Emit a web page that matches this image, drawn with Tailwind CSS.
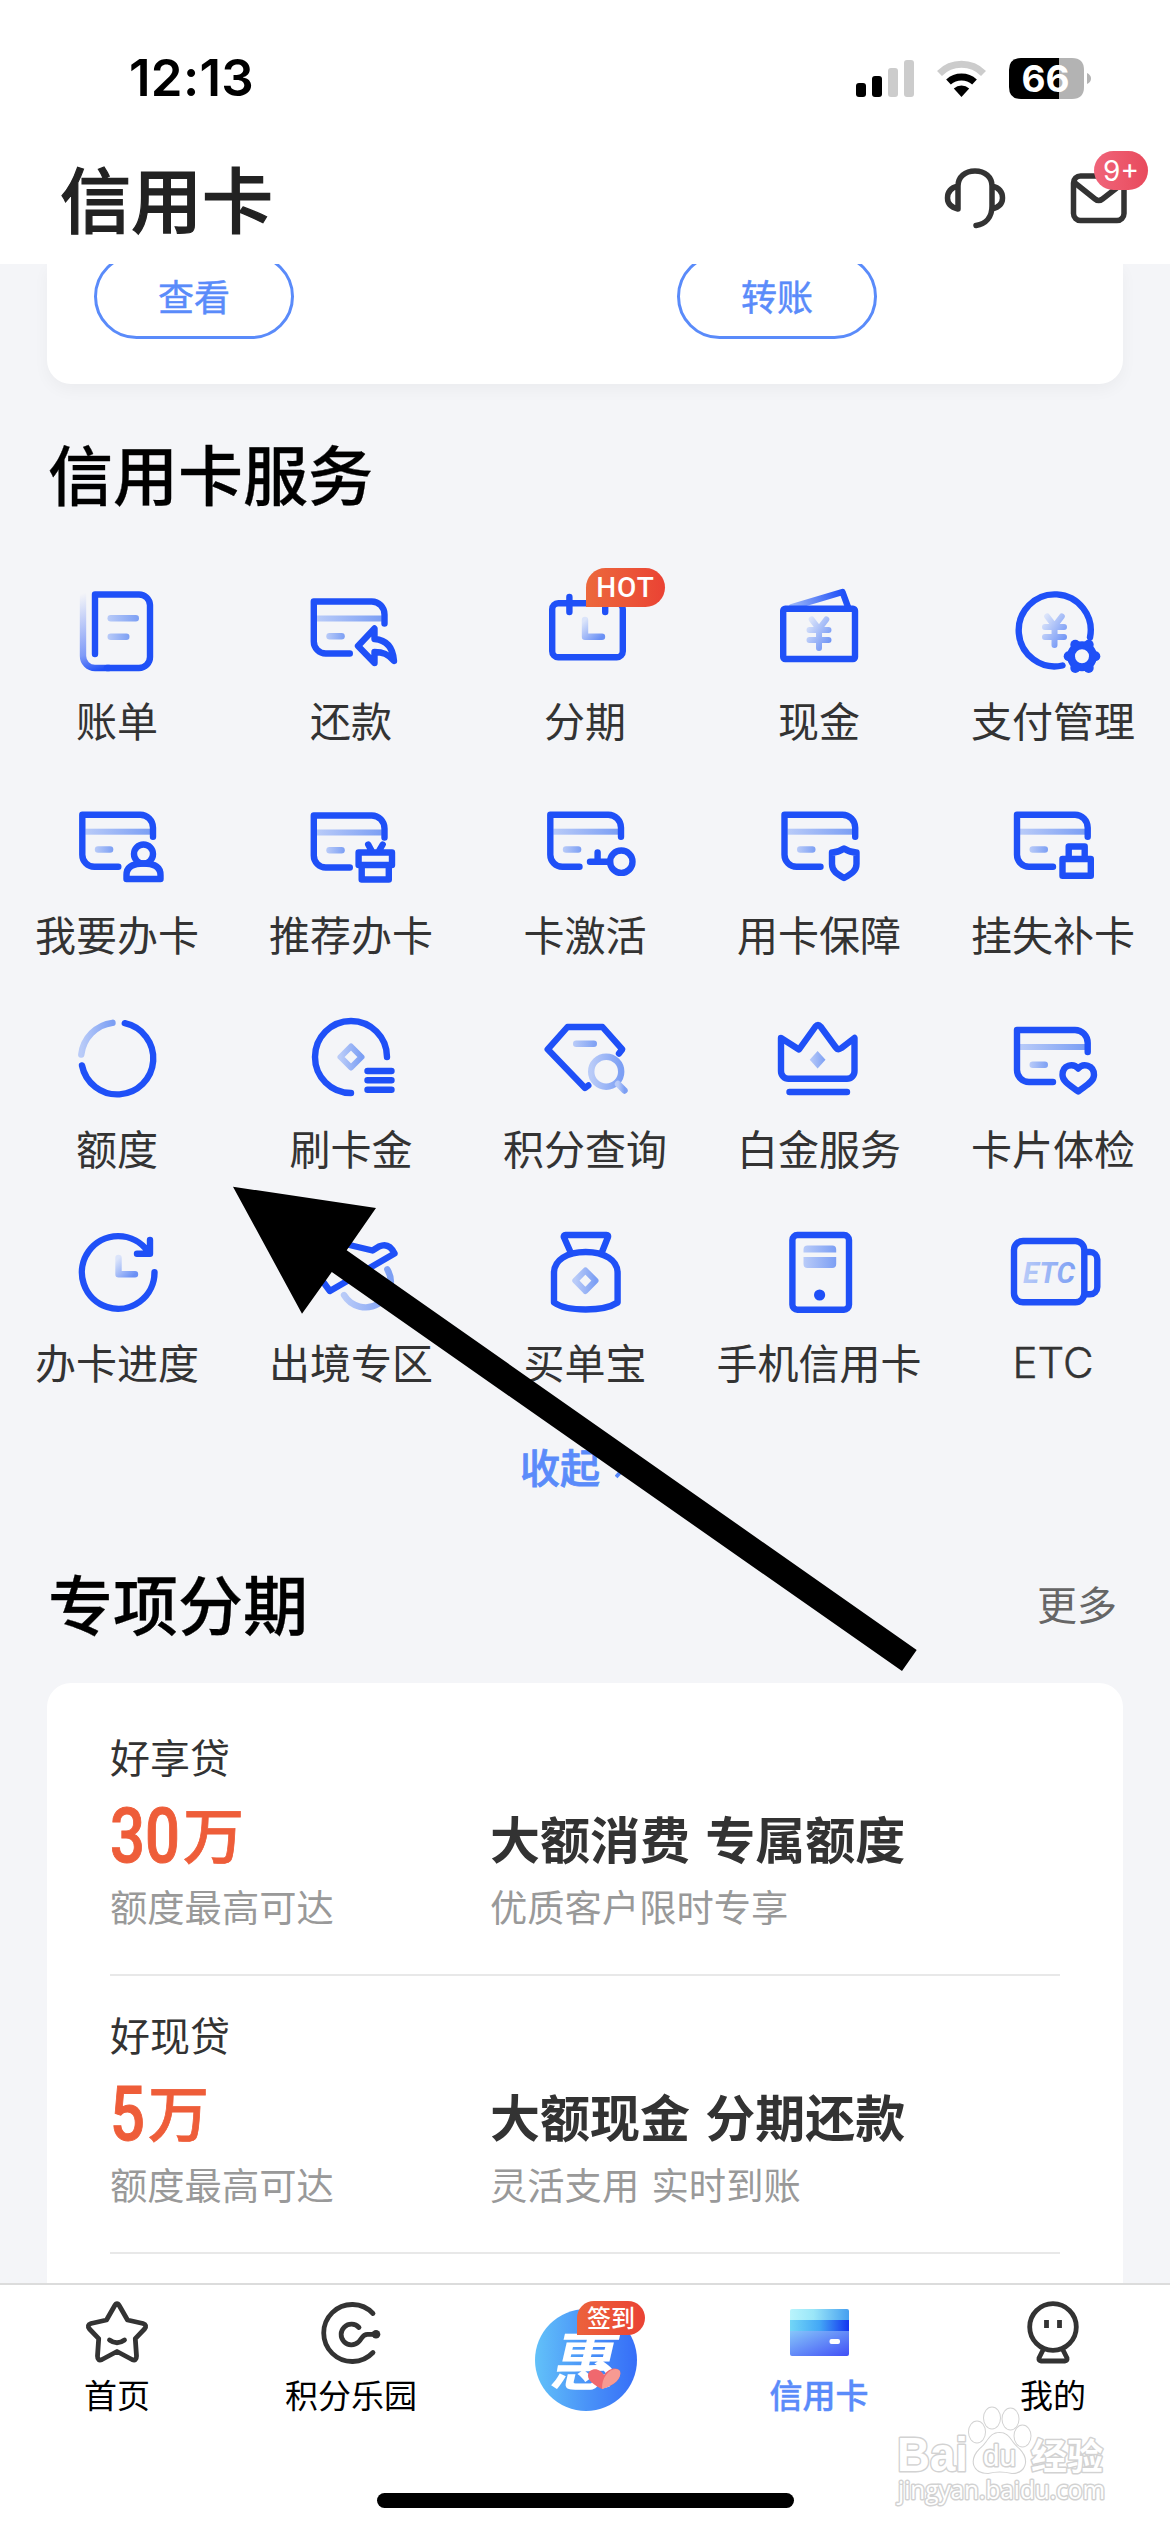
<!DOCTYPE html>
<html lang="zh-CN">
<head>
<meta charset="utf-8">
<title>信用卡</title>
<script src="https://cdn.jsdelivr.net/npm/@tailwindcss/browser@4"></script>
</head>
<body class="bg-white">
<!-- shared gradients and symbols -->
<svg class="absolute size-0" aria-hidden="true">
  <defs>
    <linearGradient id="soft"><stop offset="0" stop-color="#b9cbf8"/><stop offset="1" stop-color="#7c9ff4"/></linearGradient>
    <linearGradient id="softv" x1="0" y1="0" x2="1" y2="1"><stop offset="0" stop-color="#dbe4fa"/><stop offset="1" stop-color="#6a90f5"/></linearGradient>
    <linearGradient id="book" gradientUnits="userSpaceOnUse" x1="24" y1="14" x2="50" y2="88"><stop offset="0" stop-color="#1f50f7" stop-opacity="0"/><stop offset=".75" stop-color="#1f50f7" stop-opacity=".55"/><stop offset="1" stop-color="#1f50f7"/></linearGradient>
    <linearGradient id="flap" gradientUnits="userSpaceOnUse" x1="32" y1="25" x2="84" y2="12"><stop offset="0" stop-color="#9db7f8"/><stop offset="1" stop-color="#1f50f7"/></linearGradient>
    <g id="card" fill="none" stroke="#1f50f7" stroke-width="6.4" stroke-linecap="round" stroke-linejoin="round">
      <rect x="3" y="14" width="65" height="6" fill="url(#soft)" stroke="none"/>
      <rect x="12.5" y="31.5" width="18.5" height="6.5" rx="3.2" fill="url(#soft)" stroke="none"/>
      <path d="M36 52H12A12 12 0 0 1 0 40V0H58A12.700 13 0 0 1 70.700 13V22"/>
    </g>
    <g id="yen" fill="none" stroke="url(#softv)" stroke-width="6" stroke-linecap="round">
      <path d="M-7.300 -10.500L0 -1L7.300 -10.500M-9.500 0Q0 .1 9.500 0M-9.500 10Q0 10.100 9.500 10M0 -1Q.1 9 0 18"/>
    </g>
  </defs>
</svg>

<div class="relative flex h-[2532px] w-[1170px] flex-col overflow-hidden bg-[#f4f5f8] font-['Noto_Sans_CJK_SC',sans-serif]">

  <!-- status bar and page title -->
  <header class="h-[264px] shrink-0 bg-white">
    <div class="flex h-[156px] items-center pl-[129px] pr-[79px]">
      <span class="font-['Inter',sans-serif] text-[51px] font-semibold leading-[50px] tracking-[0.3px] text-black">12:13</span>
      <svg class="ml-auto" width="236" height="44" viewBox="0 0 236 44">
        <g fill="#000"><rect x="1" y="27" width="10" height="14" rx="3"/><rect x="17" y="20" width="10" height="21" rx="3"/></g>
        <g fill="#ccc"><rect x="33" y="12" width="10" height="29" rx="3"/><rect x="49" y="4" width="10" height="37" rx="3"/></g>
        <path d="M106.500 41L98.800 32.500A11.500 11.500 0 0 1 114.200 32.500Z" fill="#000"/>
        <path d="M93.500 26A19.500 19.500 0 0 1 119.500 26" fill="none" stroke="#000" stroke-width="7"/>
        <path d="M84.500 17.500A31 31 0 0 1 128.500 17.500" fill="none" stroke="#ccc" stroke-width="7"/>
        <path d="M166 2H204V43H166Q154 43 154 31V14Q154 2 166 2Z" fill="#000"/>
        <path d="M204 2H217Q229 2 229 14V31Q229 43 217 43H204Z" fill="#b3b3b3"/>
        <path d="M232 17Q236 19 236 22.500T232 28Z" fill="#b3b3b3"/>
        <text x="190.500" y="36" font-family="Inter, sans-serif" font-weight="700" font-size="37" fill="#fff" text-anchor="middle">66</text>
      </svg>
    </div>
    <div class="flex items-center pl-[60px] pr-[20px]">
      <h1 class="-translate-y-[2px] text-[71px] font-medium leading-[84px] text-[#222] [-webkit-text-stroke:1.2px_#222]">信用卡</h1>
      <svg class="ml-auto" width="66" height="66" viewBox="0 0 66 66" fill="none" stroke="#333" stroke-width="5.500" stroke-linecap="round">
        <path d="M16 44V21C16 12 23 6 33 6S50 12 50 21V41C50 52 44 59 34 60.500M16 44C8 42 5.500 38 5.500 33S8 23 16 21M50 44C58 42 60.500 38 60.500 33S58 23 50 21"/>
      </svg>
      <div class="relative ml-[56px]">
        <svg width="86" height="66" viewBox="0 0 86 66" fill="none" stroke="#333" stroke-width="5.500" stroke-linejoin="round" stroke-linecap="round">
          <rect x="9.500" y="11" width="50.500" height="44.500" rx="7"/><path d="M11 18L31 34Q34.700 37 38.500 34L59 18"/>
        </svg>
        <span class="absolute left-[30px] top-[-14px] flex h-[39px] w-[54px] items-center justify-center rounded-full bg-linear-to-r from-[#f0647a] to-[#e84a5c] font-['Inter',sans-serif] text-[28px] leading-none text-white">9+</span>
      </div>
    </div>
  </header>

  <main class="min-h-0 flex-1 overflow-hidden">
    <div class="mx-[47px] flex h-[120px] rounded-b-[24px] bg-white pl-[47px] shadow-[0_6px_16px_rgba(0,0,0,0.04)] [clip-path:inset(0_-20px_-20px_-20px)]">
      <div class="-mt-[10px] flex h-[85px] w-[200px] items-center justify-center rounded-full border-[3px] border-[#5a8bfa] pb-[4px] text-[36px] leading-none text-[#5a8bfa] [-webkit-text-stroke:0.5px_#5a8bfa]">查看</div>
      <div class="-mt-[10px] ml-[383px] flex h-[85px] w-[200px] items-center justify-center rounded-full border-[3px] border-[#5a8bfa] pb-[4px] text-[36px] leading-none text-[#5a8bfa] [-webkit-text-stroke:0.5px_#5a8bfa]">转账</div>
    </div>

    <h2 class="ml-[48px] mt-[55px] text-[65px] font-medium leading-[66px] text-black [-webkit-text-stroke:0.3px_#000]">信用卡服务</h2>

    <div class="mt-[75px] grid grid-cols-5 gap-y-[52px] text-center text-[41px] leading-[42px] text-[#333] [&_svg]:mx-auto [&_svg]:block [&_p]:mt-[18px] [&_p]:mb-[2px] [&_p]:whitespace-nowrap">
      <div>
        <svg width="120" height="100" viewBox="0 0 120 100" fill="none" stroke="#1f50f7" stroke-width="6.400" stroke-linecap="round" stroke-linejoin="round">
          <path d="M26 15V76A12 12 0 0 0 38 88H52" stroke="url(#book)"/><path d="M38 74V14.500H82A11 11 0 0 1 93 25V77A11 11 0 0 1 82 88H50"/>
          <g fill="url(#soft)" stroke="none"><rect x="50.500" y="35" width="31.500" height="6.500" rx="3.200"/><rect x="50.500" y="53.500" width="22" height="6.500" rx="3.200"/></g>
        </svg><p>账单</p>
      </div>
      <div>
        <svg width="120" height="100" viewBox="0 0 120 100"><use href="#card" x="22.800" y="21.500"/>
          <path d="M67 66L83.500 48.500V59C95 60 102 67 103 81C97 74 92 72 83.500 72V83Z" fill="none" stroke="#1f50f7" stroke-width="6.400" stroke-linejoin="round"/>
        </svg><p>还款</p>
      </div>
      <div class="relative">
        <svg width="120" height="100" viewBox="0 0 120 100" fill="none" stroke="#1f50f7" stroke-width="6.400" stroke-linecap="round" stroke-linejoin="round">
          <rect x="27.200" y="23.300" width="70.600" height="54" rx="6"/><path d="M44.400 17V32M80.200 17V32"/><path d="M60 40V56.700H77" stroke="url(#softv)"/>
        </svg><p>分期</p>
        <span class="absolute left-[118px] top-[-12px] flex h-[39px] w-[79px] items-center justify-center rounded-full rounded-bl-none bg-linear-to-r from-[#ec683c] to-[#ea4234] font-['Roboto',sans-serif] text-[28px] font-medium leading-none tracking-[1px] text-white">HOT</span>
      </div>
      <div>
        <svg width="120" height="100" viewBox="0 0 120 100" fill="none" stroke="#1f50f7" stroke-width="6.400" stroke-linecap="round" stroke-linejoin="round">
          <path d="M33 27L83.500 12L89 27" stroke="url(#flap)"/><rect x="24.200" y="28.700" width="71.800" height="50.300" rx="2"/><use href="#yen" x="60" y="50"/>
        </svg><p>现金</p>
      </div>
      <div>
        <svg width="120" height="100" viewBox="0 0 120 100" fill="none" stroke="#1f50f7" stroke-width="6.400" stroke-linecap="round" stroke-linejoin="round">
          <path d="M97 57.500A36 36 0 1 0 69.500 85.500"/><use href="#yen" x="61.500" y="47"/>
          <circle cx="89" cy="76.300" r="11" stroke-width="8"/>
          <g fill="#1f50f7" stroke="none"><circle cx="102.300" cy="76.300" r="5"/><circle cx="75.700" cy="76.300" r="5"/><circle cx="95.700" cy="64.700" r="5"/><circle cx="82.300" cy="64.700" r="5"/><circle cx="95.700" cy="87.900" r="5"/><circle cx="82.300" cy="87.900" r="5"/></g>
        </svg><p>支付管理</p>
      </div>

      <div>
        <svg width="120" height="100" viewBox="0 0 120 100" fill="none" stroke="#1f50f7" stroke-width="6.400" stroke-linejoin="round"><use href="#card" x="25.300" y="20.700"/>
          <circle cx="86.500" cy="60" r="9.500"/><path d="M69.500 85V81C69.500 73 76 69.500 86.500 69.500S103.500 73 103.500 81V85Z"/>
        </svg><p>我要办卡</p>
      </div>
      <div>
        <svg width="120" height="100" viewBox="0 0 120 100" fill="none" stroke="#1f50f7" stroke-width="6.400" stroke-linejoin="round" stroke-linecap="round"><use href="#card" x="22.800" y="21.500"/>
          <path d="M67.600 58.500H101V71H67.600ZM70.700 71V85.500H97.800V71M77.200 50.500L81.500 58.500M91.700 50.500L87 58.500"/>
        </svg><p>推荐办卡</p>
      </div>
      <div>
        <svg width="120" height="100" viewBox="0 0 120 100" fill="none" stroke="#1f50f7" stroke-width="6.400" stroke-linecap="round" stroke-linejoin="round">
          <rect x="28.300" y="34.700" width="65" height="6" fill="url(#soft)" stroke="none"/><rect x="37.800" y="52.200" width="18.500" height="6.500" rx="3.200" fill="url(#soft)" stroke="none"/>
          <path d="M54.500 72.700H37.300A12 12 0 0 1 25.300 60.700V20.700H83.300A12.700 13 0 0 1 96 33.700V42.700"/>
          <circle cx="96.300" cy="67.700" r="11.200"/><path d="M65 67.700H85M72.600 67V58.500"/>
        </svg><p>卡激活</p>
      </div>
      <div>
        <svg width="120" height="100" viewBox="0 0 120 100" fill="none" stroke="#1f50f7" stroke-width="6.400" stroke-linejoin="round"><use href="#card" x="25.500" y="20.700"/>
          <path d="M85 54.500Q79 58.500 73 58.500V70C73 77 78 80 85 84C92 80 97.500 77 97.500 70V58.500Q91 58.500 85 54.500Z"/>
        </svg><p>用卡保障</p>
      </div>
      <div>
        <svg width="120" height="100" viewBox="0 0 120 100" fill="none" stroke="#1f50f7" stroke-width="6.400" stroke-linejoin="round"><use href="#card" x="24" y="20.700"/>
          <path d="M69.500 65H97.800V81.700H69.500ZM75.700 65V52.500H91.700V65"/>
        </svg><p>挂失补卡</p>
      </div>

      <div>
        <svg width="120" height="100" viewBox="0 0 120 100" fill="none" stroke="#1f50f7" stroke-width="6.400" stroke-linecap="round">
          <path d="M67.800 15.200A36 36 0 1 1 25 57.500"/><path d="M24.300 46.500A36 36 0 0 1 55.500 14.800" stroke="url(#soft)"/>
        </svg><p>额度</p>
      </div>
      <div>
        <svg width="120" height="100" viewBox="0 0 120 100" fill="none" stroke="#1f50f7" stroke-width="6.400" stroke-linecap="round">
          <path d="M96 49A36 36 0 1 0 60 85M76.500 63H100.500M76.500 72.300H100.500M76.500 81.700H100.500"/><path d="M60 38.500L70.500 49L60 59.500L49.500 49Z" stroke="url(#soft)" stroke-width="6" stroke-linejoin="round"/>
        </svg><p>刷卡金</p>
      </div>
      <div>
        <svg width="120" height="100" viewBox="0 0 120 100" fill="none" stroke="#1f50f7" stroke-width="6.400" stroke-linecap="round" stroke-linejoin="round">
          <path d="M94 45.500L97.300 41.300L77.500 19H42.500L22.700 41.300L60 80L63.300 77.500"/><rect x="48" y="32.500" width="24" height="6.500" rx="3.200" fill="url(#soft)" stroke="none"/>
          <g stroke="url(#soft)"><circle cx="81.200" cy="63.700" r="15"/><path d="M93 76L99.500 82.500"/></g>
        </svg><p>积分查询</p>
      </div>
      <div>
        <svg width="120" height="100" viewBox="0 0 120 100" fill="none" stroke="#1f50f7" stroke-width="6.400" stroke-linecap="round" stroke-linejoin="round">
          <path d="M22 30L40 41.500L56.500 18.500Q59 15.500 61.500 18.500L76.500 39Q79 42.500 82.500 40L95.500 30V63A7.500 7.500 0 0 1 88 70.700H29.500A7.500 7.500 0 0 1 22 63ZM30.500 84H88"/><path d="M58.600 43L66.500 51.700L58.600 60.500L50.700 51.700Z" fill="url(#soft)" stroke="none"/>
        </svg><p>白金服务</p>
      </div>
      <div>
        <svg width="120" height="100" viewBox="0 0 120 100" fill="none" stroke="#1f50f7" stroke-width="6.400" stroke-linejoin="round"><use href="#card" x="24" y="22"/>
          <path d="M85.200 60.500C80 54.500 69.500 57 69.500 67C69.500 74 78 78 85.200 83.500C92 78 101 74 101 67C101 57 90 54.500 85.200 60.500Z"/>
        </svg><p>卡片体检</p>
      </div>

      <div>
        <svg width="120" height="100" viewBox="0 0 120 100" fill="none" stroke="#1f50f7" stroke-width="6.400" stroke-linecap="round" stroke-linejoin="round">
          <path d="M97.500 50.300A36.300 36.300 0 1 1 90.500 29M93 18V31.700H80"/><path d="M61.500 36V52.300H78" stroke="url(#softv)"/>
        </svg><p>办卡进度</p>
      </div>
      <div>
        <svg width="120" height="100" viewBox="0 0 120 100" fill="none" stroke="#1f50f7" stroke-width="6.400" stroke-linecap="round" stroke-linejoin="round">
          <path d="M53 73A25 25 0 0 0 96.300 47.300" stroke="url(#soft)"/><path d="M50 21L81.500 28.500L88 24.500Q98 20 103.500 31.500L38.900 69L30 57"/>
        </svg><p>出境专区</p>
      </div>
      <div>
        <svg width="120" height="100" viewBox="0 0 120 100" fill="none" stroke="#1f50f7" stroke-width="6.400" stroke-linecap="round" stroke-linejoin="round">
          <path d="M45.500 30L38.800 15Q38.500 13 40.500 13H81.500Q83.500 13 83 15L77 30M29 80.500V51C29 38 42 30 60.700 30S92.600 38 92.600 51V80.500C85 85.500 74 87.500 60.700 87.500S36 85.500 29 80.500Z"/><path d="M60.400 48.500L70.500 58.700L60.400 69L50.300 58.700Z" stroke="url(#soft)" stroke-width="6"/>
        </svg><p>买单宝</p>
      </div>
      <div>
        <svg width="120" height="100" viewBox="0 0 120 100">
          <rect x="33.400" y="13" width="56.600" height="74.700" rx="5" fill="none" stroke="#1f50f7" stroke-width="6.400"/><circle cx="60.600" cy="73" r="5.600" fill="#1f50f7"/>
          <path d="M48.500 23.500H73.200Q77.200 23.500 77.200 27.500V30.500H44.500V27.500Q44.500 23.500 48.500 23.500ZM44.500 35H77.200V42Q77.200 46 73.200 46H48.500Q44.500 46 44.500 42Z" fill="url(#soft)"/>
        </svg><p>手机信用卡</p>
      </div>
      <div>
        <svg width="120" height="100" viewBox="0 0 120 100" fill="none" stroke="#1f50f7" stroke-width="6.400">
          <rect x="21" y="19" width="70.300" height="61.300" rx="9"/><path d="M92 30H97A7.300 7.300 0 0 1 104.300 37.300V65A7.300 7.300 0 0 1 97 72.300H92"/>
          <text x="30" y="61.300" textLength="52" lengthAdjust="spacingAndGlyphs" font-family="Roboto, sans-serif" font-weight="700" font-style="italic" font-size="30" fill="url(#soft)" stroke="none">ETC</text>
        </svg><p class="translate-y-[2px] font-['Inter',sans-serif] text-[42px] font-light [-webkit-text-stroke:0.4px_#333]">ETC</p>
      </div>
    </div>

    <div class="mt-[61px] flex items-center pl-[520px] text-[40px] font-medium leading-[42px] text-[#5a8bfa] [-webkit-text-stroke:0.8px_#5a8bfa]">收起
      <svg class="ml-[15px] mt-2" width="24" height="20" viewBox="0 0 24 20" fill="none" stroke="currentColor" stroke-width="4"><path d="M1 17L11 6L21 17"/></svg>
    </div>

    <div class="mt-[82px] flex items-center justify-between pl-[48px] pr-[53px]">
      <h2 class="text-[65px] font-medium leading-[66px] text-black [-webkit-text-stroke:0.3px_#000]">专项分期</h2>
      <span class="mt-[2px] text-[40px] leading-[42px] text-[#666]">更多</span>
    </div>

    <section class="mx-[47px] mt-[48px] h-[700px] rounded-t-[24px] bg-white px-[63px] pt-[15px]">
      <div class="flex h-[278px] items-end border-b-2 border-[#e8e8e8] pb-[49px]">
        <div class="w-[380px]">
          <p class="text-[40px] leading-[42px] text-[#333]">好享贷</p>
          <p class="mt-[29px] flex h-[60px] items-center leading-[60px] text-[#ee5d39]"><span class="block w-[73px] origin-left scale-x-[0.81] font-['Roboto',sans-serif] text-[76px] font-medium [-webkit-text-stroke:1px_#ee5d39]">30</span><span class="-mt-[6px] text-[61px] font-medium [-webkit-text-stroke:0.8px_#ee5d39]">万</span></p>
          <p class="mt-[21px] text-[37.300px] leading-[38px] text-[#999]">额度最高可达</p>
        </div>
        <div>
          <p class="text-[50px] font-bold leading-[50px] text-[#333] [word-spacing:4px]">大额消费 专属额度</p>
          <p class="mt-[25px] text-[37.300px] leading-[38px] text-[#999]">优质客户限时专享</p>
        </div>
      </div>
      <div class="flex h-[278px] items-end border-b-2 border-[#e8e8e8] pb-[49px]">
        <div class="w-[380px]">
          <p class="text-[40px] leading-[42px] text-[#333]">好现贷</p>
          <p class="mt-[29px] flex h-[60px] items-center leading-[60px] text-[#ee5d39]"><span class="block w-[38px] origin-left scale-x-[0.81] font-['Roboto',sans-serif] text-[76px] font-medium [-webkit-text-stroke:1px_#ee5d39]">5</span><span class="-mt-[6px] text-[61px] font-medium [-webkit-text-stroke:0.8px_#ee5d39]">万</span></p>
          <p class="mt-[21px] text-[37.300px] leading-[38px] text-[#999]">额度最高可达</p>
        </div>
        <div>
          <p class="text-[50px] font-bold leading-[50px] text-[#333] [word-spacing:4px]">大额现金 分期还款</p>
          <p class="mt-[25px] text-[37.300px] leading-[38px] text-[#999] [word-spacing:4px]">灵活支用 实时到账</p>
        </div>
      </div>
    </section>
  </main>

  <!-- tab bar -->
  <nav class="relative grid h-[249px] shrink-0 grid-cols-5 border-t-2 border-[#dcdcdc] bg-white pt-[13px] text-center text-[33px] leading-[34px] text-black [&_p]:mt-[9px]">
    <div>
      <svg class="mx-auto block" width="70" height="70" viewBox="0 0 70 70" fill="none" stroke="#333" stroke-width="4.800" stroke-linecap="round" stroke-linejoin="round">
        <path d="M32.500 8Q35 3.500 37.500 8L45.500 22L61 25.500Q65.500 27 62.500 31L53.300 40.700L54.500 58Q54.500 63.500 50 61.500L35 53.500L20 61.500Q15.500 63.500 15.500 58L16.700 40.700L7.500 31Q4.500 27 9 25.500L24.500 22ZM27.500 42Q35 47.500 42.500 42"/>
      </svg><p>首页</p>
    </div>
    <div>
      <svg class="mx-auto block" width="70" height="70" viewBox="0 0 70 70" fill="none" stroke="#333" stroke-width="4.800" stroke-linecap="round">
        <path d="M57 15.500A28.500 28.500 0 1 0 57 54.500M43 29.500A10.300 10.300 0 1 0 42.500 44C46 41 46 36.300 51.500 36.300H60"/><circle cx="60" cy="36.300" r="4.300" fill="#333" stroke="none"/>
      </svg><p>积分乐园</p>
    </div>
    <div class="relative">
      <svg class="mx-auto mt-[10px] block" width="104" height="104" viewBox="0 0 104 104">
        <defs><linearGradient id="hui"><stop offset="0" stop-color="#62c1f9"/><stop offset=".5" stop-color="#4a94f8"/><stop offset="1" stop-color="#366ef8"/></linearGradient></defs>
        <circle cx="53" cy="52" r="51" fill="url(#hui)"/>
        <text transform="translate(16 76.500) skewX(-13)" font-family="Noto Sans CJK SC, sans-serif" font-weight="700" font-size="64" fill="#fff">惠</text>
        <path d="M69 81C56 75 52 68 57 63C62 59 68 62 71 67C75 61 83 58 87 63C89 70 82 77 69 81Z" fill="#f0686e"/><path d="M69 81C69 75 70 71 73 67C77 61 84 59 87 63C89 70 82 77 69 81Z" fill="#f79a92"/>
      </svg>
      <span class="absolute left-[109px] top-[3px] flex h-[34px] w-[68px] items-center justify-center rounded-full rounded-bl-none bg-linear-to-r from-[#ec623c] to-[#ea4234] pb-[2px] text-[24px] font-medium leading-none text-white">签到</span>
    </div>
    <div>
      <svg class="mx-auto block" width="70" height="70" viewBox="0 0 70 70">
        <defs>
          <linearGradient id="c1"><stop offset="0" stop-color="#b9f4fc"/><stop offset=".4" stop-color="#9ae6f8"/><stop offset="1" stop-color="#459ff0"/></linearGradient>
          <linearGradient id="c2"><stop offset="0" stop-color="#72d6f7"/><stop offset=".5" stop-color="#44a8f6"/><stop offset="1" stop-color="#1434f0"/></linearGradient>
          <linearGradient id="c3" x1="0" y1="0" x2="1" y2="1"><stop offset="0" stop-color="#86c6fa"/><stop offset="1" stop-color="#414ff6"/></linearGradient>
        </defs>
        <path d="M8 11H63Q65 11 65 13V22H6V13Q6 11 8 11Z" fill="url(#c1)"/><rect x="6" y="22" width="59" height="11" fill="url(#c2)"/><path d="M6 33H65V56Q65 58 63 58H8Q6 58 6 56Z" fill="url(#c3)"/><rect x="45.500" y="41" width="10.500" height="5" rx="2" fill="#fff"/>
      </svg><p class="font-medium text-[#5a8bfa] [-webkit-text-stroke:0.4px_#5a8bfa]">信用卡</p>
    </div>
    <div>
      <svg class="mx-auto block" width="70" height="70" viewBox="0 0 70 70" fill="none" stroke="#333" stroke-width="4.800" stroke-linejoin="round">
        <circle cx="35" cy="29" r="23.300"/><path d="M25.500 51L21 60Q20.500 63 23 63H47Q49.500 63 49 60L44.500 51"/><path d="M28.500 22V30M41.500 22V30"/>
      </svg><p>我的</p>
    </div>
    <span class="absolute left-[377px] top-[208px] h-[15px] w-[417px] rounded-full bg-black"></span>

    <!-- Baidu watermark -->
    <svg class="absolute left-[891px] top-[117px]" width="225" height="110" viewBox="0 0 225 110" fill="#fff" stroke="#d2d2d2" stroke-width="3" stroke-linejoin="round" paint-order="stroke">
      <text x="6" y="69" font-family="Liberation Sans, sans-serif" font-weight="700" font-size="49" textLength="71" lengthAdjust="spacingAndGlyphs">Bai</text>
      <g stroke-width="2"><ellipse cx="86" cy="30" rx="8" ry="10.500"/><ellipse cx="101" cy="16" rx="8" ry="10.500"/><ellipse cx="119.500" cy="17" rx="8" ry="10.500"/><ellipse cx="131.500" cy="34" rx="8" ry="10.500"/>
      <path d="M108.500 31C119 31 119 40 128 47C139 58 134 71 121 71Q108.500 68 97 71C82 71 78 58 89 47C98 40 98 31 108.500 31Z"/></g>
      <text x="92" y="64" font-family="Liberation Sans, sans-serif" font-weight="400" font-size="30" textLength="33" lengthAdjust="spacingAndGlyphs">du</text>
      <text x="140" y="68" font-family="Noto Sans CJK SC, sans-serif" font-weight="700" font-size="36" textLength="72">经验</text>
      <text x="7" y="97" font-family="Open Sans, sans-serif" font-size="25" textLength="207" lengthAdjust="spacingAndGlyphs">jingyan.baidu.com</text>
    </svg>
  </nav>

  <!-- pointer arrow over the content -->
  <svg class="absolute left-[230px] top-[1180px]" width="700" height="500" viewBox="230 1180 700 500"><path d="M233 1186.700L376 1208L346.700 1250.300L916.700 1650L902 1671L331.800 1272L302 1313.700Z"/></svg>
</div>
</body>
</html>
